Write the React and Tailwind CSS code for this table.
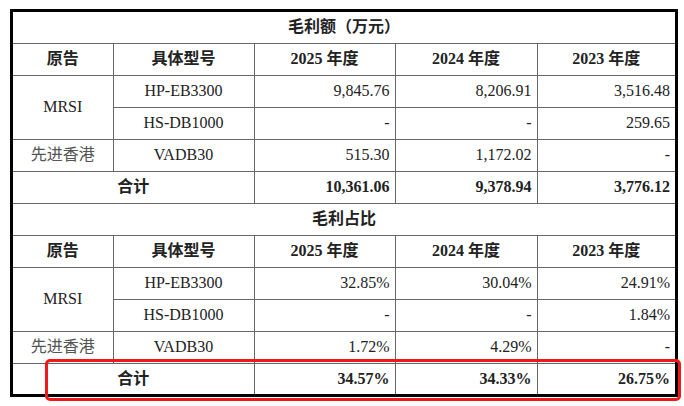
import React from "react";

const amountRows = [
  { owner: "MRSI", span: 2, model: "HP-EB3300", v: ["9,845.76", "8,206.91", "3,516.48"] },
  { model: "HS-DB1000", v: ["-", "-", "259.65"] },
  { owner: "先进香港", span: 1, model: "VADB30", v: ["515.30", "1,172.02", "-"] },
];

const ratioRows = [
  { owner: "MRSI", span: 2, model: "HP-EB3300", v: ["32.85%", "30.04%", "24.91%"] },
  { model: "HS-DB1000", v: ["-", "-", "1.84%"] },
  { owner: "先进香港", span: 1, model: "VADB30", v: ["1.72%", "4.29%", "-"] },
];

const cell = "border border-[#666] p-0";

function Section({ title, rows, total, first, last }) {
  return (
    <>
      <tr className={first ? "h-[31px]" : "h-[32px]"}>
        <td colSpan={5} className={`${cell} text-center font-bold`}>
          {title}
        </td>
      </tr>
      <tr className="h-[32px]">
        <td className={`${cell} text-center font-bold`}>原告</td>
        <td className={`${cell} text-center font-bold`}>具体型号</td>
        <td className={`${cell} text-center font-bold`}>2025 年度</td>
        <td className={`${cell} text-center font-bold`}>2024 年度</td>
        <td className={`${cell} text-center font-bold`}>2023 年度</td>
      </tr>
      {rows.map((r) => (
        <tr key={r.model} className="h-[32px]">
          {r.owner && (
            <td
              rowSpan={r.span}
              className={`${cell} text-center ${r.owner === "MRSI" ? "text-[#222]" : "text-[#555]"}`}
            >
              {r.owner}
            </td>
          )}
          <td className={`${cell} text-center`}>{r.model}</td>
          {r.v.map((x, i) => (
            <td key={i} className={`${cell} text-right pr-[5px]`}>
              {x}
            </td>
          ))}
        </tr>
      ))}
      <tr className={last ? "h-[31px]" : "h-[32px]"}>
        <td colSpan={2} className={`${cell} text-center font-bold`}>
          合计
        </td>
        {total.map((x, i) => (
          <td key={i} className={`${cell} text-right pr-[5px] font-bold`}>
            {x}
          </td>
        ))}
      </tr>
    </>
  );
}

export default function App() {
  return (
    <div className="relative w-[684px] h-[406px] bg-white overflow-hidden font-['Liberation_Serif','Noto_Sans_CJK_SC',serif] text-[16px] text-[#222]">
      {/* Table */}
      <div className="ml-[10px] mt-[9px] w-[668px] border-[3px] border-black">
        <table className="w-[662px] table-fixed border-collapse border-hidden leading-none">
          <colgroup>
            <col className="w-[100px]" />
            <col className="w-[141px]" />
            <col className="w-[141px]" />
            <col className="w-[142px]" />
            <col className="w-[138px]" />
          </colgroup>
          <tbody>
            <Section
              title="毛利额（万元）"
              rows={amountRows}
              total={["10,361.06", "9,378.94", "3,776.12"]}
              first
            />
            <Section
              title="毛利占比"
              rows={ratioRows}
              total={["34.57%", "34.33%", "26.75%"]}
              last
            />
          </tbody>
        </table>
      </div>

      {/* Highlight around the ratio total */}
      <div className="absolute left-[45px] top-[359px] w-[636px] h-[42px] border-[3px] border-[#f01818] rounded-[5px]" />
    </div>
  );
}
